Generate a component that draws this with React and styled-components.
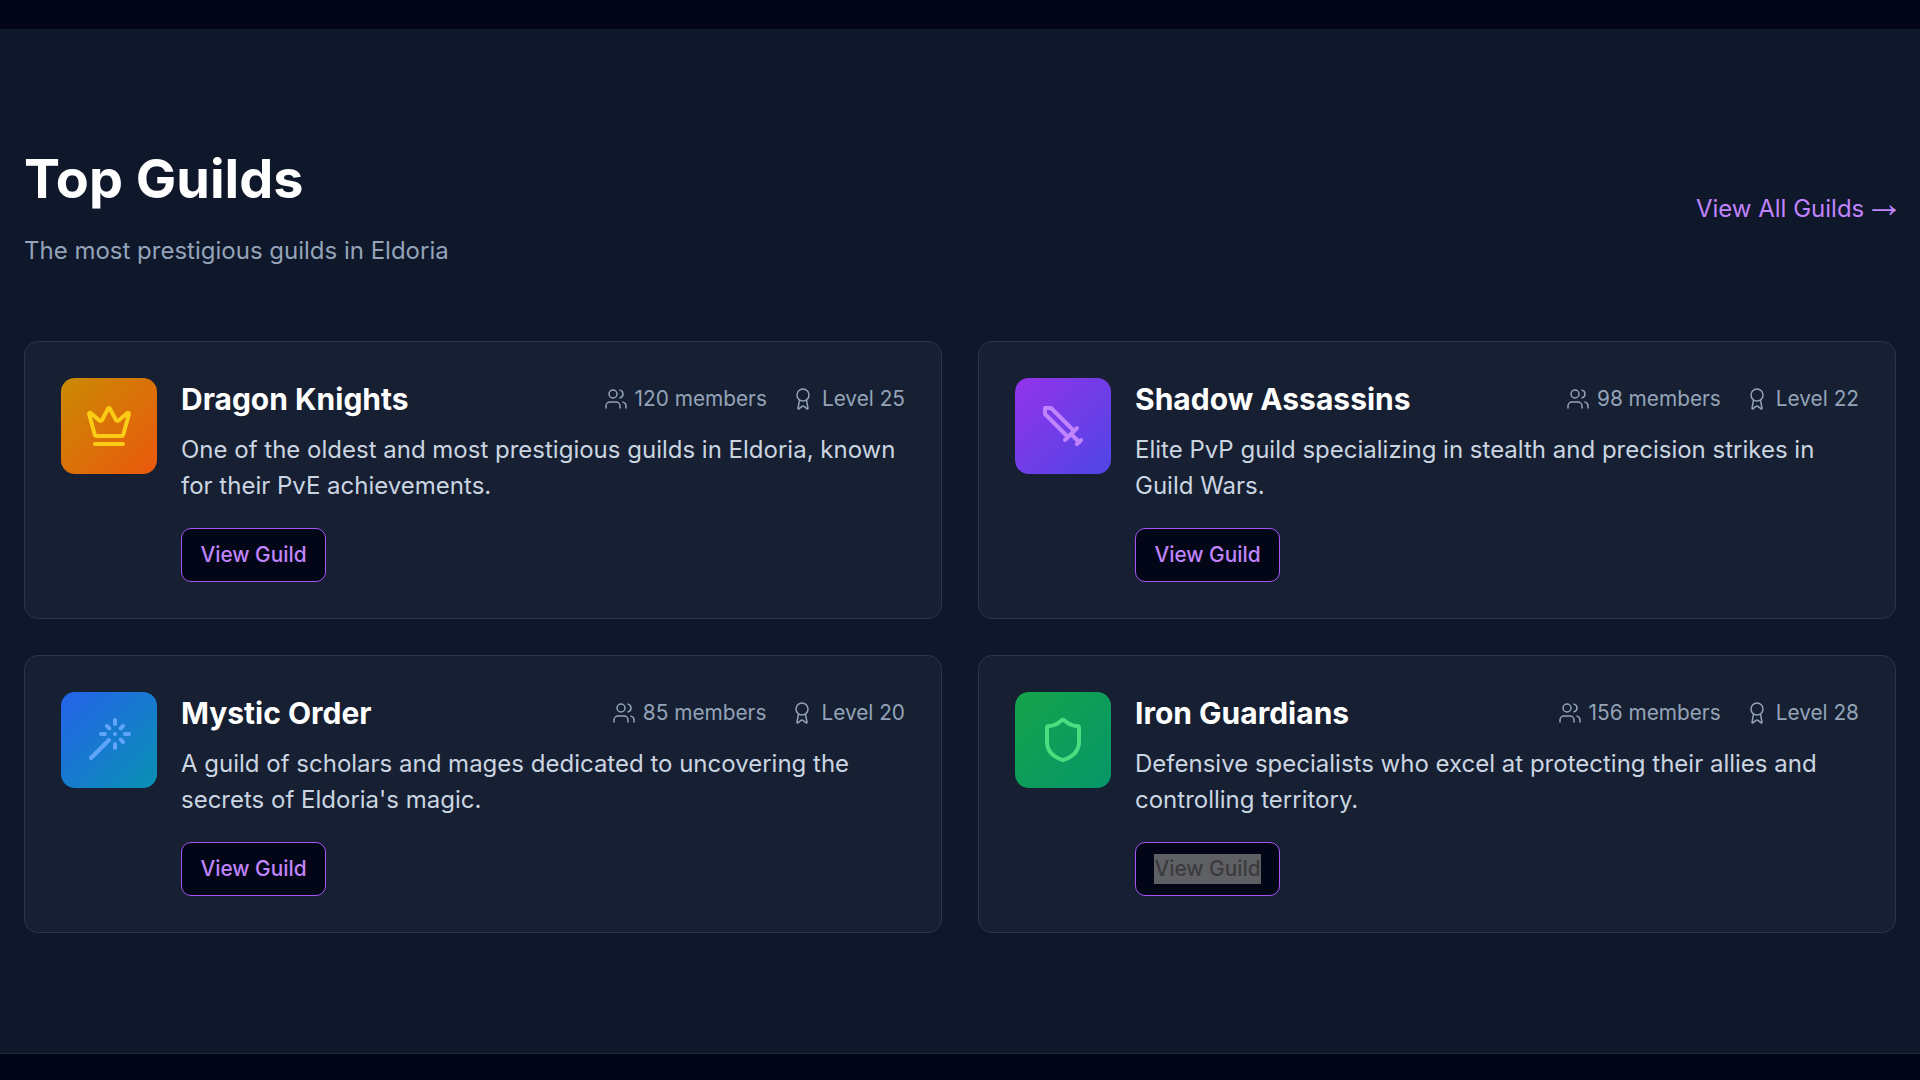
import React from 'react';
import styled, { createGlobalStyle } from 'styled-components';
import { Crown, Wand, Shield, Users, Award } from 'lucide-react';

const Global = createGlobalStyle`
  html { font-size: 19.2px; }
  body { margin: 0; background: #020617; font-family: Inter, "Noto Sans", sans-serif; }
`;
const Page = styled.div`
  height: 1080px;
  overflow: hidden;
  padding-top: 29px;
  box-sizing: border-box;
`;
const Section = styled.section`
  height: 1025px;
  box-sizing: border-box;
  background: #0f172a;
  border-bottom: 1px solid #1e293b;
  padding: 96px 24px 0;
`;
const Head = styled.header`
  display: flex;
  justify-content: space-between;
  align-items: center;
  height: 168px;
  margin-bottom: 48px;
`;
const Intro = styled.div`
  align-self: flex-start;
`;
const Title = styled.h2`
  margin: 0 0 1px;
  font-size: 54px;
  line-height: 107px;
  font-weight: 700;
  color: #fff;
`;
const Sub = styled.p`
  margin: 0;
  font-size: 24px;
  line-height: 36px;
  color: #94a3b8;
`;
const AllLink = styled.a`
  font-size: 24px;
  line-height: 36px;
  color: #c084fc;
  white-space: nowrap;
`;
const Arrow = styled.span`
  font-family: "Liberation Sans", sans-serif;
  font-size: 40px;
  line-height: 0;
  vertical-align: 0;
  margin: 0 -8px 0 -7px;
`;
const Grid = styled.div`
  display: grid;
  grid-template-columns: 1fr 1fr;
  gap: 36px;
`;
const Card = styled.article`
  display: flex;
  gap: 24px;
  box-sizing: border-box;
  height: 278px;
  padding: 36px;
  background: #162032;
  border: 1px solid #2a3648;
  border-radius: 14px;
`;
const Badge = styled.div`
  flex: none;
  width: 96px;
  height: 96px;
  display: flex;
  align-items: center;
  justify-content: center;
  border-radius: 14px;
  background: linear-gradient(135deg, ${p => p.$from}, ${p => p.$to});
  color: ${p => p.$ink};
`;
const Body = styled.div`
  flex: 1;
  min-width: 0;
`;
const Row = styled.div`
  display: flex;
  justify-content: space-between;
  align-items: center;
  margin-bottom: 12px;
`;
const Name = styled.h3`
  margin: 0;
  font-size: 30px;
  line-height: 42px;
  font-weight: 700;
  color: #fff;
`;
const Meta = styled.div`
  display: flex;
  gap: 24px;
`;
const Stat = styled.span`
  display: flex;
  align-items: center;
  gap: 7px;
  font-size: 20.8px;
  line-height: 30px;
  color: #94a3b8;
`;
const Desc = styled.p`
  margin: 0 0 24px;
  font-size: 24px;
  line-height: 36px;
  color: #cbd5e1;
`;
const Btn = styled.button`
  display: block;
  box-sizing: border-box;
  width: 145px;
  height: 54px;
  padding: 0 0 1px;
  background: #020617;
  border: 1px solid #a855f7;
  border-radius: 10px;
  font: 500 20.8px Inter, sans-serif;
  color: #c084fc;
`;
const Selected = styled.span`
  display: inline-block;
  line-height: 30px;
  background: #5f6064;
  color: #3b3b3e;
`;
const SwordIcon = () => (
  <svg width="48" height="48" viewBox="0 0 24 24" fill="none" stroke="currentColor" strokeWidth="2" strokeLinecap="round" strokeLinejoin="round">
    <polyline points="14.5 17.5 3 6 3 3 6 3 17.5 14.5" />
    <line x1="13" y1="19" x2="19" y2="13" />
    <line x1="16" y1="16" x2="20" y2="20" />
    <line x1="19" y1="21" x2="21" y2="19" />
  </svg>
);
const guilds = [
  { name: 'Dragon Knights', members: 120, level: 25, from: '#ca8a04', to: '#ea580c', ink: '#facc15', icon: <Crown size={48} />,
    desc: 'One of the oldest and most prestigious guilds in Eldoria, known for their PvE achievements.' },
  { name: 'Shadow Assassins', members: 98, level: 22, from: '#9333ea', to: '#4f46e5', ink: '#c084fc', icon: <SwordIcon />,
    desc: 'Elite PvP guild specializing in stealth and precision strikes in Guild Wars.' },
  { name: 'Mystic Order', members: 85, level: 20, from: '#2563eb', to: '#0891b2', ink: '#60a5fa', icon: <Wand size={48} />,
    desc: "A guild of scholars and mages dedicated to uncovering the secrets of Eldoria's magic." },
  { name: 'Iron Guardians', members: 156, level: 28, from: '#16a34a', to: '#059669', ink: '#4ade80', icon: <Shield size={48} />, selected: true,
    desc: 'Defensive specialists who excel at protecting their allies and controlling territory.' },
];
export default function App() {
  return (
    <Page>
      <Global />
      <Section>
        <Head>
          <Intro>
            <Title>Top Guilds</Title>
            <Sub>The most prestigious guilds in Eldoria</Sub>
          </Intro>
          <AllLink>View All Guilds <Arrow>→</Arrow></AllLink>
        </Head>
        <Grid>
          {guilds.map(g => (
            <Card key={g.name}>
              <Badge $from={g.from} $to={g.to} $ink={g.ink}>{g.icon}</Badge>
              <Body>
                <Row>
                  <Name>{g.name}</Name>
                  <Meta>
                    <Stat><Users size={24} strokeWidth={1.5} />{g.members} members</Stat>
                    <Stat><Award size={24} strokeWidth={1.5} />Level {g.level}</Stat>
                  </Meta>
                </Row>
                <Desc>{g.desc}</Desc>
                <Btn>{g.selected ? <Selected>View Guild</Selected> : 'View Guild'}</Btn>
              </Body>
            </Card>
          ))}
        </Grid>
      </Section>
    </Page>
  );
}
